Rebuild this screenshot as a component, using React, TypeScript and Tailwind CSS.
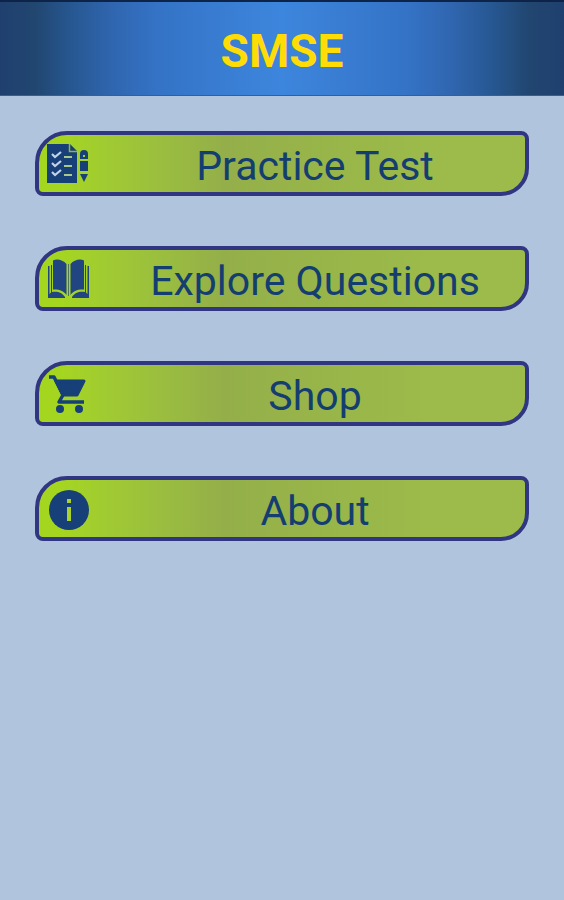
import type { ReactNode } from 'react'

type MenuItem = {
  label: string
  icon: ReactNode
}

function ChecklistIcon() {
  return (
    <svg viewBox="0 0 42 42" className="h-full w-full" aria-hidden="true">
      <path d="M0 1h23l7 7v32H0z" fill="#173f78" />
      <path d="M22.500 1v7.500h7.500" fill="none" stroke="#8fb93a" strokeWidth="1.500" />
      <path
        d="M5 11l3 3 6-5M5 20l3 3 6-5M5 29l3 3 6-5"
        fill="none"
        stroke="#c3d3e6"
        strokeWidth="2.200"
      />
      <path d="M17 14h8M17 23h8M17 32h8" stroke="#a9c98a" strokeWidth="2.200" />
      <path
        d="M33 16v-5a4 4 0 0 1 8 0v5zM33 18h8v10h-8zM33 31h8l-4 8z"
        fill="#173f78"
      />
      <path d="M36 12h2v2h-2z" fill="#a5d02b" />
    </svg>
  )
}

function BookIcon() {
  return (
    <svg viewBox="0 0 42 42" className="h-full w-full" aria-hidden="true">
      <path
        d="M6 2.500C10 .5 16 2 19.500 6v31C17 33 12 31 6 31.500zM37 2.500C33 .5 27 2 23.500 6v31C26 33 31 31 37 31.500z"
        fill="#204580"
      />
      <path d="M21.500 6v32" stroke="#4f7455" strokeWidth="1" />
      <path
        d="M1 8h1.500v28L4 34.500V7h1v27c5-1 10 0 13 5v1H1zM42 8h-1.500v28L39 34.500V7h-1v27c-5-1-10 0-13 5v1h17z"
        fill="#204580"
      />
    </svg>
  )
}

function CartIcon() {
  return (
    <svg viewBox="0 0 42 42" className="h-full w-full" aria-hidden="true">
      <path d="M2 4h5l9 18-4 7h25" fill="none" stroke="#173f78" strokeWidth="3.500" strokeLinejoin="round" />
      <path
        d="M9 8h28l-7 14H16z"
        fill="#173f78"
        stroke="#173f78"
        strokeWidth="3"
        strokeLinejoin="round"
      />
      <circle cx="13" cy="36" r="4" fill="#173f78" />
      <circle cx="32" cy="36" r="4" fill="#173f78" />
    </svg>
  )
}

function InfoIcon() {
  return (
    <svg viewBox="0 0 42 42" className="h-full w-full" aria-hidden="true">
      <circle cx="22" cy="22" r="20" fill="#173f78" />
      <path d="M20 11h4v4h-4zM20 19h4v14h-4z" fill="#a9d22c" />
    </svg>
  )
}

const menuItems: MenuItem[] = [
  { label: 'Practice Test', icon: <ChecklistIcon /> },
  { label: 'Explore Questions', icon: <BookIcon /> },
  { label: 'Shop', icon: <CartIcon /> },
  { label: 'About', icon: <InfoIcon /> },
]

function MenuButton({ label, icon }: MenuItem) {
  return (
    <button
      type="button"
      className="flex h-[65px] w-full items-center rounded-tl-[32px] rounded-tr-lg rounded-br-[28px] rounded-bl-lg border-4 border-[#303681] bg-linear-to-r from-[#a5d61f] from-5% via-[#94af49] via-38% to-[#9cbb4a] to-80% bg-origin-border pl-2"
    >
      <span className="h-[42px] w-[42px] shrink-0">{icon}</span>
      <span className="flex-1 pt-1 pl-4 text-center text-[41px] leading-[56px] text-[#143e70]">
        {label}
      </span>
    </button>
  )
}

export default function App() {
  return (
    <div className="min-h-screen bg-[#b0c4dd] font-['Roboto',sans-serif]">
      <header className="flex h-24 items-center justify-center border-t-2 border-b border-t-[#0d2347] border-b-[#2c62a4] bg-[linear-gradient(to_right,#1f406f_0%,#21466f_6%,#275893_13%,#3066b0_20%,#3473c6_28%,#3d86dd_50%,#3473c6_72%,#3066b0_80%,#275893_87%,#21466f_94%,#1f406f_100%)] pt-1">
        <h1 className="text-[46px] leading-[56px] font-bold text-[#ffdc05]">SMSE</h1>
      </header>
      <nav className="flex flex-col gap-[50px] px-[35px] pt-[35px]">
        {menuItems.map((item) => (
          <MenuButton key={item.label} {...item} />
        ))}
      </nav>
    </div>
  )
}
